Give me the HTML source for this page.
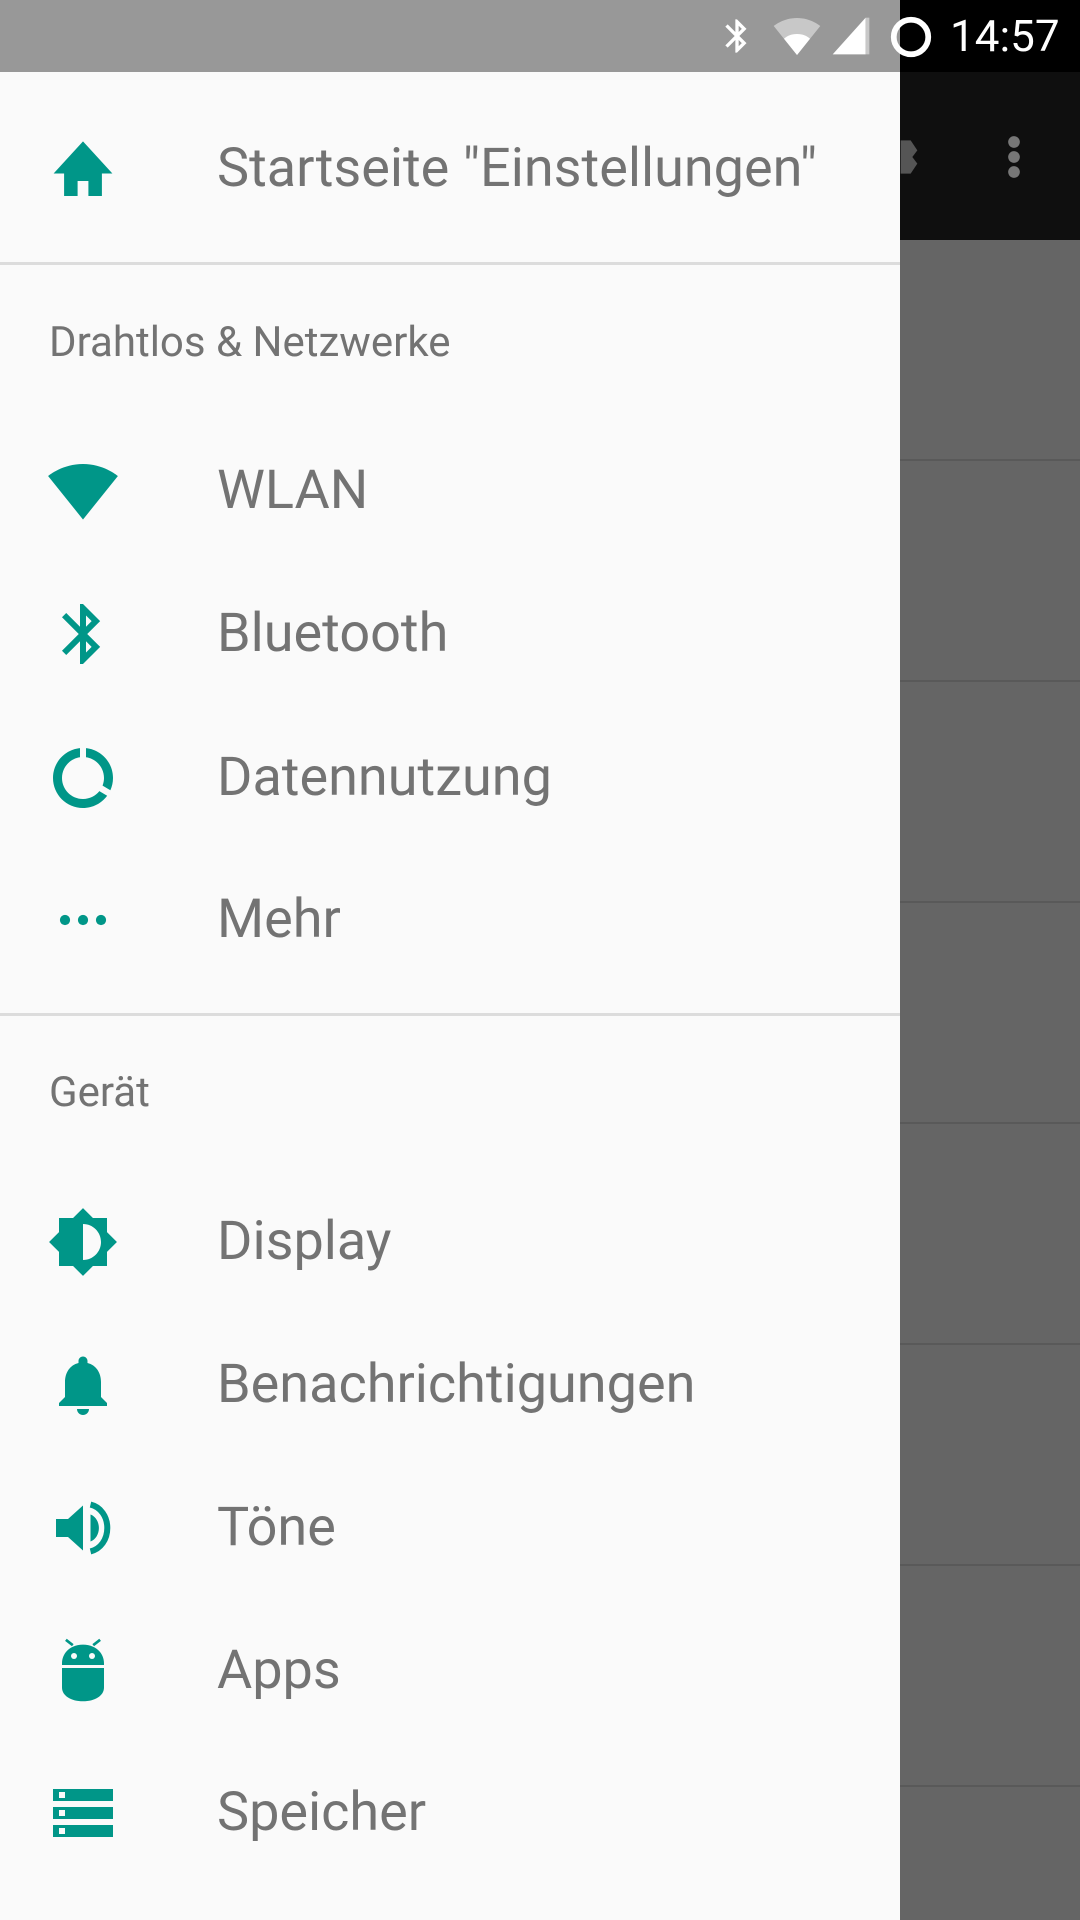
<!DOCTYPE html>
<html><head><meta charset="utf-8"><style>
*{margin:0;padding:0;box-sizing:border-box}
body{width:1080px;height:1920px;position:relative;overflow:hidden;background:#656565;font-family:"Roboto","Liberation Sans",sans-serif}
.sb{position:absolute;left:0;top:0;height:72px;width:1080px;background:#000}
.sbl{position:absolute;left:0;top:0;width:900px;height:72px;background:#989898}
.tb{position:absolute;left:900px;top:72px;width:180px;height:168px;background:#0f0f0f}
.ln{position:absolute;left:900px;width:180px;height:2px;background:#595959}
.dr{position:absolute;left:0;top:72px;width:900px;height:1848px;background:#fafafa}
.it{position:absolute;left:217px;font-size:54px;color:#737373;line-height:1;transform:translateY(-50%)}
.hd{position:absolute;left:49px;font-size:42px;color:#737373;line-height:1;transform:translateY(-50%)}
.ic{position:absolute;left:47px;width:72px;height:72px;transform:translateY(-50%)}
.dv{position:absolute;left:0;width:900px;height:3px;background:#dcdcdc}
.time{position:absolute;left:950px;top:12px;font-size:44px;color:#fff;line-height:48px}
</style></head><body>
<div class="sb"></div><div class="sbl"></div>
<svg style="position:absolute;left:717px;top:14px" width="40" height="44" viewBox="0 0 24 24"><path fill="#fff" d="M17.71 7.71L12 2h-1v7.59L6.41 5 5 6.41 10.59 12 5 17.590 6.41 19 11 14.41V22h1l5.71-5.71-4.3-4.29 4.3-4.29zM13 5.83l1.88 1.88L13 9.59V5.83zm1.88 10.46L13 18.17v-3.76l1.88 1.88z"/></svg>
<svg style="position:absolute;left:770px;top:12px" width="54" height="48" viewBox="0 0 24 24"><path fill="#c8c8c8" d="M12.01 21.49L23.64 7c-.45-.34-4.93-4-11.64-4C5.28 3 .81 6.66.36 7l11.63 14.49z"/><path fill="#fff" d="M12.01 21.49L18.5 13.4C17 12 15 11 12 11S7 12 5.5 13.4z"/></svg>
<svg style="position:absolute;left:828px;top:14px" width="46" height="44" viewBox="0 0 24 24"><path fill="#fff" d="M2 22h18V2z"/><path fill="#c8c8c8" d="M20 22h2V2l-2 0z"/></svg>
<svg style="position:absolute;left:888px;top:14px" width="46" height="46" viewBox="0 0 24 24"><circle cx="12" cy="12" r="9" fill="none" stroke="#fff" stroke-width="3"/></svg>
<div class="time">14:57</div>
<div class="tb"></div>
<svg style="position:absolute;left:1000px;top:132px" width="28" height="50" viewBox="0 0 10 30"><circle cx="5" cy="6" r="3.5" fill="#777"/><circle cx="5" cy="15" r="3.5" fill="#777"/><circle cx="5" cy="24" r="3.5" fill="#777"/></svg>
<svg style="position:absolute;left:895px;top:132px" width="28" height="50" viewBox="0 0 10 30"><path fill="#555" d="M0 5h6l4 6-3 4 3 4-4 6H0z"/></svg>
<div class="ln" style="top:459px"></div><div class="ln" style="top:680px"></div><div class="ln" style="top:901px"></div><div class="ln" style="top:1122px"></div><div class="ln" style="top:1343px"></div><div class="ln" style="top:1564px"></div><div class="ln" style="top:1785px"></div>
<div class="dr"></div>
<svg class="ic" style="top:169px" viewBox="0 0 24 24"><path fill="#009688" d="M12 2.8L2.2 13.5h3.5V21h4.5v-5h3.6v5h4.5v-7.5h3.5z"/></svg>
<div class="it" style="top:169px">Startseite "Einstellungen"</div>
<div class="dv" style="top:262px"></div>
<div class="hd" style="top:343px">Drahtlos &amp; Netzwerke</div>
<svg class="ic" style="top:491px" viewBox="0 0 24 24"><path fill="#009688" d="M12.01 21.49L23.64 7c-.45-.34-4.93-4-11.64-4C5.28 3 .81 6.66.36 7l11.63 14.49z"/></svg>
<div class="it" style="top:491px">WLAN</div>
<svg class="ic" style="top:634px" viewBox="0 0 24 24"><path fill="#009688" d="M17.71 7.71L12 2h-1v7.59L6.41 5 5 6.41 10.59 12 5 17.59 6.41 19 11 14.41V22h1l5.71-5.71-4.3-4.29 4.3-4.29zM13 5.83l1.88 1.88L13 9.59V5.83zm1.88 10.46L13 18.17v-3.76l1.88 1.88z"/></svg>
<div class="it" style="top:634px">Bluetooth</div>
<svg class="ic" style="top:778px" viewBox="0 0 24 24"><path fill="#009688" d="M13 2.05v3.03c3.39.49 6 3.39 6 6.92 0 .9-.18 1.75-.48 2.54l2.6 1.53c.56-1.24.88-2.62.88-4.07 0-5.18-3.95-9.45-9-9.95zM12 19c-3.87 0-7-3.13-7-7 0-3.53 2.61-6.43 6-6.92V2.05c-5.06.5-9 4.76-9 9.95 0 5.52 4.47 10 9.99 10 3.31 0 6.24-1.61 8.06-4.09l-2.6-1.53C16.17 17.98 14.21 19 12 19z"/></svg>
<div class="it" style="top:778px">Datennutzung</div>
<svg class="ic" style="top:920px" viewBox="0 0 24 24"><circle cx="6" cy="12" r="1.7" fill="#009688"/><circle cx="12" cy="12" r="1.7" fill="#009688"/><circle cx="18" cy="12" r="1.7" fill="#009688"/></svg>
<div class="it" style="top:920px">Mehr</div>
<div class="dv" style="top:1013px"></div>
<div class="hd" style="top:1093px">Gerät</div>
<svg class="ic" style="top:1242px" viewBox="0 0 24 24"><path fill="#009688" fill-rule="evenodd" d="M20 15.31L23.31 12 20 8.69V4h-4.69L12 .69 8.69 4H4v4.69L.69 12 4 15.31V20h4.69L12 23.31 15.31 20H20v-4.69zM12 18V6c3.31 0 6 2.69 6 6s-2.69 6-6 6z"/></svg>
<div class="it" style="top:1242px">Display</div>
<svg class="ic" style="top:1385px" viewBox="0 0 24 24"><path fill="#009688" d="M12 22c1.1 0 2-.9 2-2h-4c0 1.1.89 2 2 2zm6-6v-5c0-3.07-1.64-5.64-4.5-6.32V4c0-.83-.67-1.5-1.5-1.5s-1.5.67-1.5 1.5v.68C7.63 5.36 6 7.92 6 11v5l-2 2v1h16v-1l-2-2z"/></svg>
<div class="it" style="top:1385px">Benachrichtigungen</div>
<svg class="ic" style="top:1528px" viewBox="0 0 24 24"><path fill="#009688" d="M3 9v6h4l5 4.5V4.5L7 9H3zm11.5-1.5v9c1.7-.6 2.8-2.5 2.8-4.5s-1.1-3.9-2.8-4.5z"/><path fill="none" stroke="#009688" stroke-width="2" d="M14.5 4.2c3.4.8 5.6 4 5.6 7.8s-2.2 7-5.6 7.8"/></svg>
<div class="it" style="top:1528px">Töne</div>
<svg class="ic" style="top:1671px" viewBox="0 0 24 24"><path fill="none" stroke="#009688" stroke-width="0.9" d="M6.3 1.6l2.3 1.8M17.7 1.6l-2.3 1.8"/><path fill="#009688" d="M5 9.5C5 5.8 8 3.2 12 3.2s7 2.6 7 6.3V10H5z M5 11h14v6.5c0 2.8-3.1 4.6-7 4.6s-7-1.8-7-4.6z"/><circle cx="9" cy="7" r="1" fill="#fafafa"/><circle cx="15" cy="7" r="1" fill="#fafafa"/></svg>
<div class="it" style="top:1671px">Apps</div>
<svg class="ic" style="top:1813px" viewBox="0 0 24 24"><path fill="#009688" d="M2 20h20v-4H2v4zm2-3h2v2H4v-2zM2 4v4h20V4H2zm4 3H4V5h2v2zm-4 7h20v-4H2v4zm2-3h2v2H4v-2z"/></svg>
<div class="it" style="top:1813px">Speicher</div>
</body></html>
